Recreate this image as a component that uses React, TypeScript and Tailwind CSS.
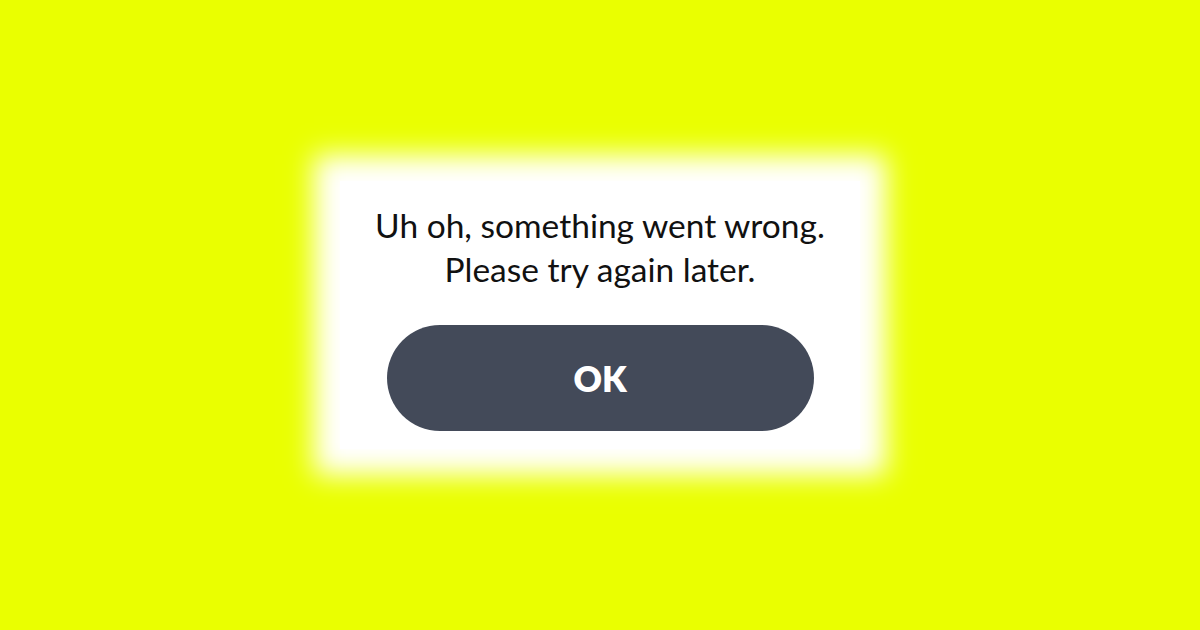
export default function App() {
  return (
    <div className="flex h-[630px] w-[1200px] items-center justify-center bg-[#eaff00] font-['Lato',sans-serif]">
      <div className="flex h-[268px] w-[520px] flex-col items-center bg-white pt-[22px] shadow-[0_0_26px_26px_#ffffff]">
        <p className="text-center text-[33.5px] leading-[44px] text-[#111111]">
          Uh oh, something went wrong.
          <br />
          Please try again later.
        </p>
        <button
          type="button"
          className="mt-[34px] flex h-[106px] w-[427px] items-center justify-center rounded-full bg-[#434a59] text-[35px] font-extrabold text-white"
        >
          OK
        </button>
      </div>
    </div>
  );
}
